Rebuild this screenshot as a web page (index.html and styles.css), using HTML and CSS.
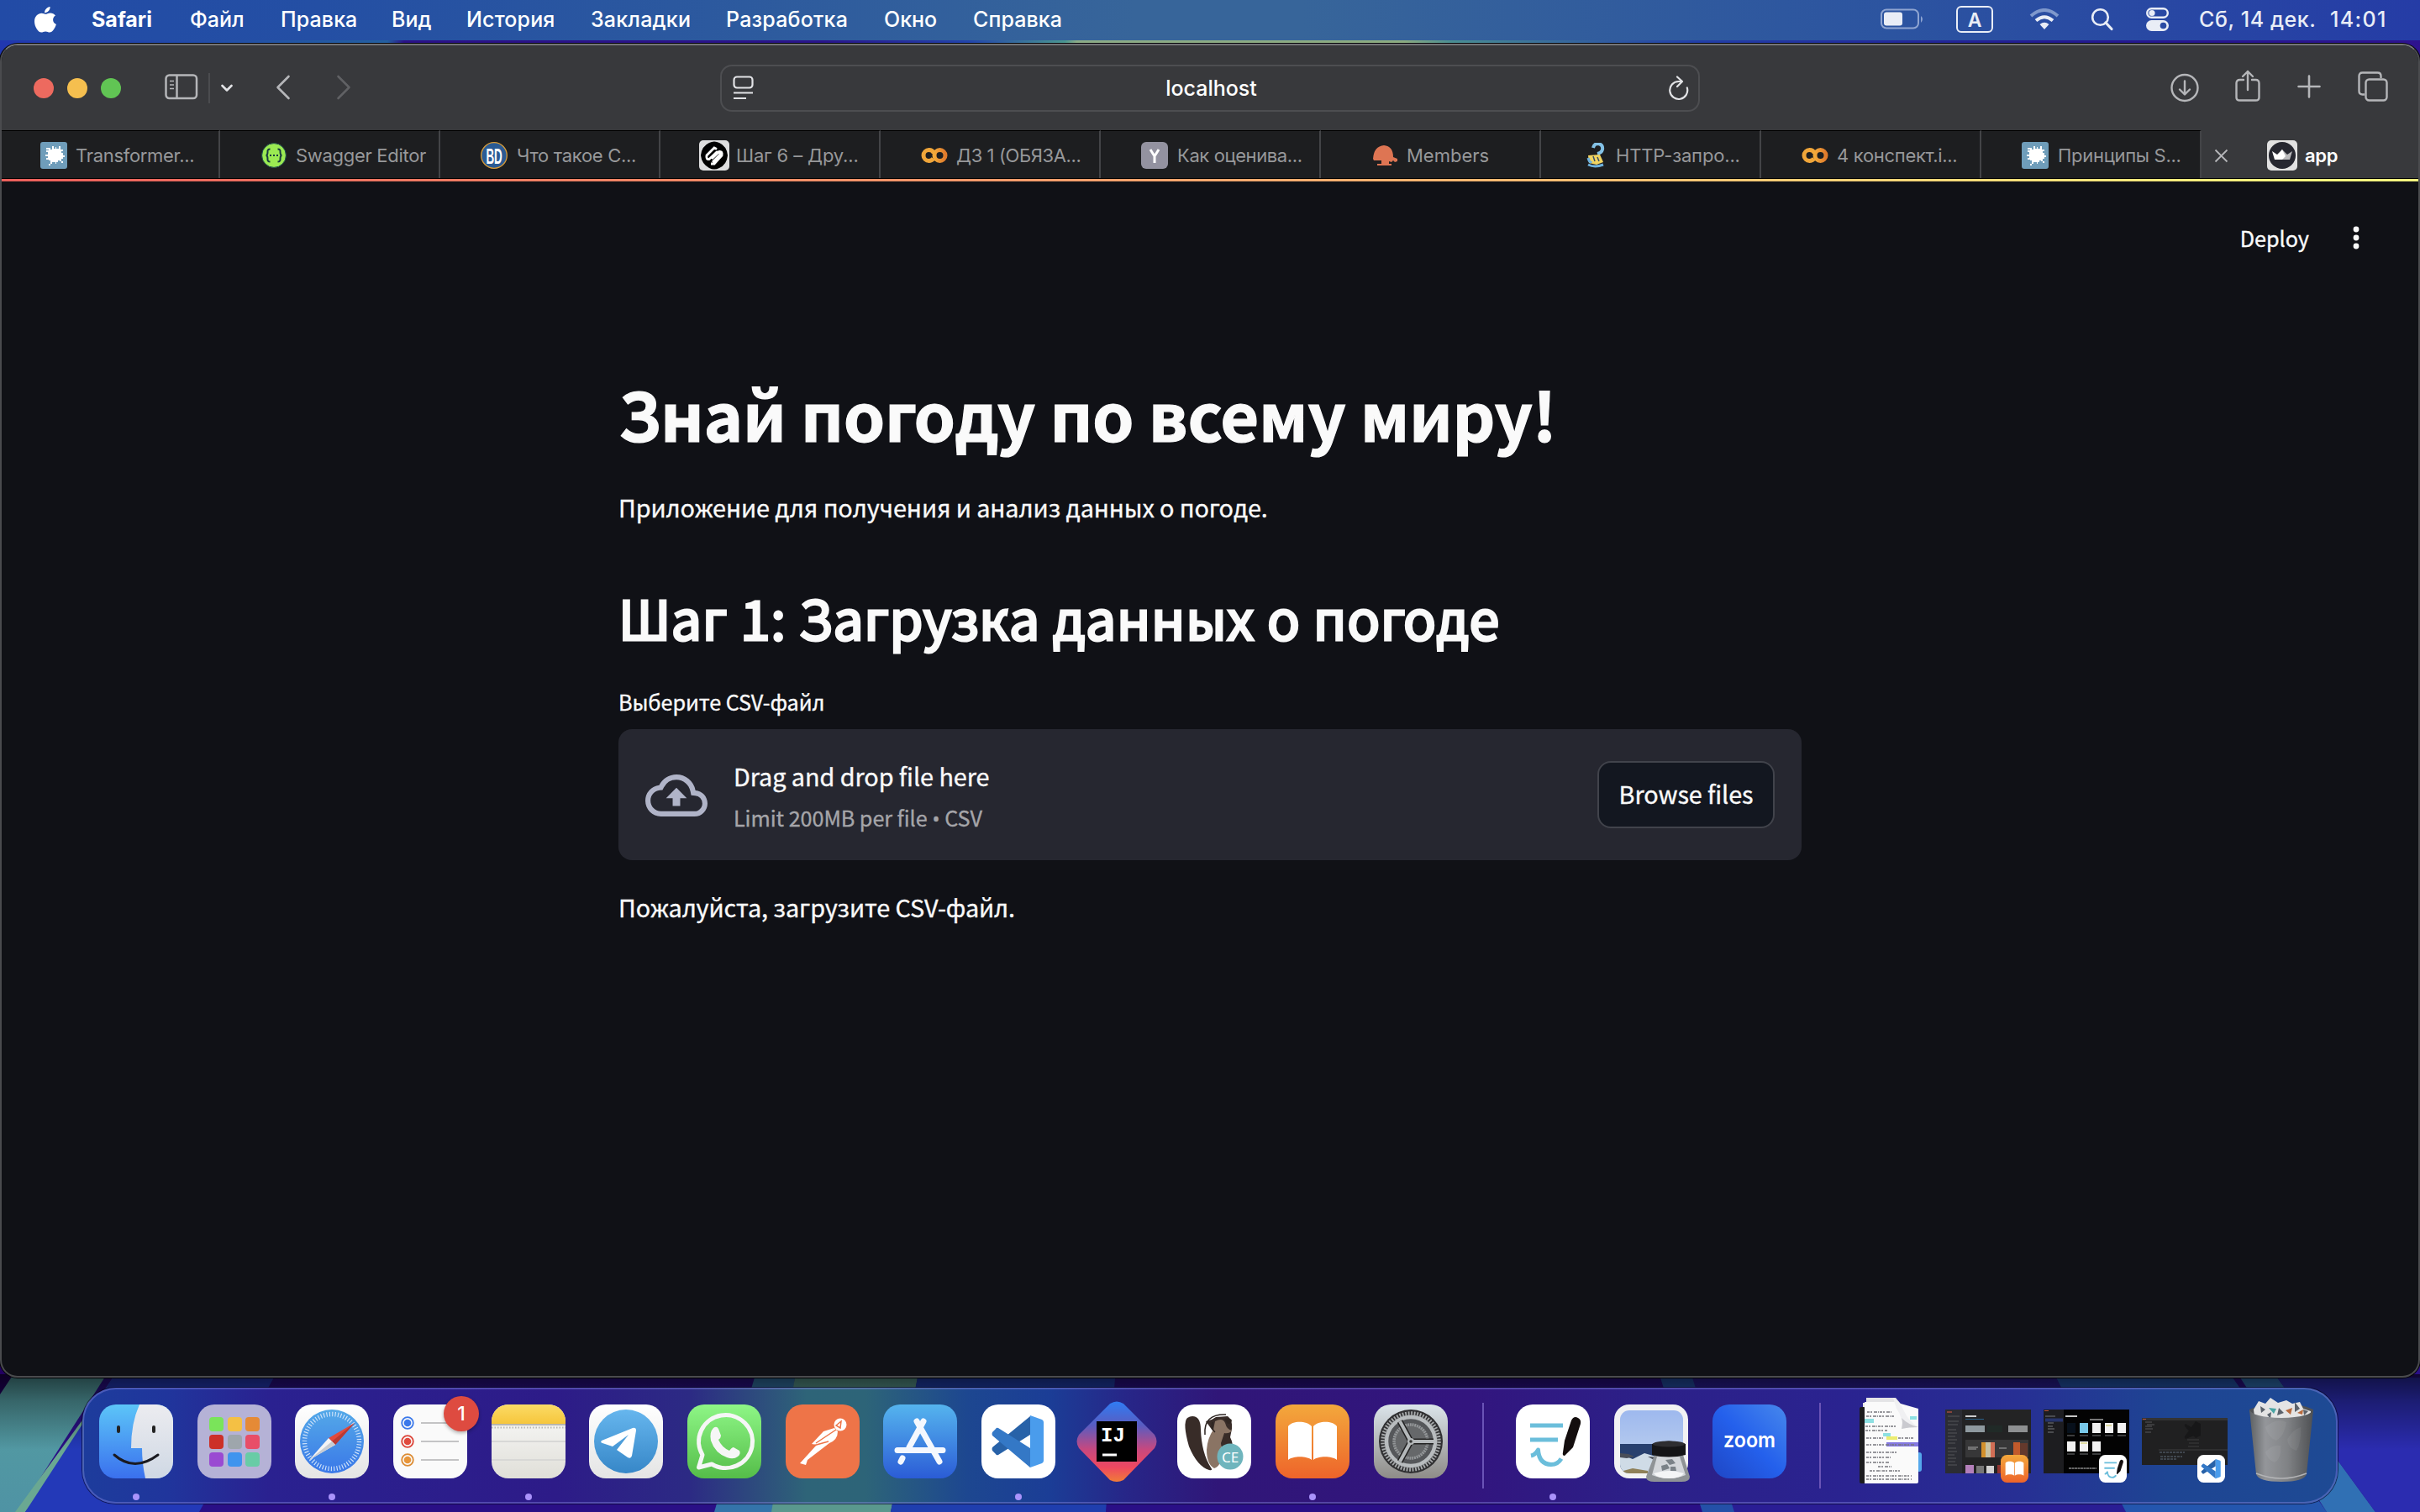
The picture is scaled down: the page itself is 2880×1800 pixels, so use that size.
FILE: index.html
```html
<!DOCTYPE html>
<html lang="ru">
<head>
<meta charset="utf-8">
<title>app</title>
<link rel="stylesheet" href="styles.css">
</head>
<body>
<svg width="0" height="0" class="defs" aria-hidden="true">
  <defs>
    <linearGradient id="gBooks" x2="0" y2="1"><stop offset="0" stop-color="#f3a83c"/><stop offset="1" stop-color="#ee642a"/></linearGradient>
    <linearGradient id="gWhite" x2="0" y2="1"><stop offset="0" stop-color="#fff"/><stop offset="1" stop-color="#e4e4e4"/></linearGradient>
    <linearGradient id="gFinder" x2="0" y2="1"><stop offset="0" stop-color="#5cc5f8"/><stop offset="1" stop-color="#3a70ee"/></linearGradient>
    <linearGradient id="gFace" x2="0" y2="1"><stop offset="0" stop-color="#ececf0"/><stop offset="1" stop-color="#cfd8e4"/></linearGradient>
    <linearGradient id="gDial" x2="0" y2="1"><stop offset="0" stop-color="#54a9e8"/><stop offset="1" stop-color="#3a78e8"/></linearGradient>
    <linearGradient id="gWa" x2="0" y2="1"><stop offset="0" stop-color="#8ef686"/><stop offset="1" stop-color="#55bd49"/></linearGradient>
    <linearGradient id="gStore" x2="0" y2="1"><stop offset="0" stop-color="#55b4ee"/><stop offset="1" stop-color="#2b5cd6"/></linearGradient>
    <linearGradient id="gTg" x2="0" y2="1"><stop offset="0" stop-color="#66b6ee"/><stop offset="1" stop-color="#3787c8"/></linearGradient>
    <linearGradient id="gGear" x2="0" y2="1"><stop offset="0" stop-color="#dbe4ea"/><stop offset="1" stop-color="#8e8c88"/></linearGradient>
    <linearGradient id="gZoom" x1="0" y1="1" x2="1" y2="0"><stop offset="0" stop-color="#1f46c4"/><stop offset=".5" stop-color="#2460ec"/><stop offset="1" stop-color="#4788ec"/></linearGradient>
    <linearGradient id="gIj" x2="0" y2="1"><stop offset="0" stop-color="#2f7cf4"/><stop offset=".3" stop-color="#5a5cc0"/><stop offset=".6" stop-color="#c8487e"/><stop offset=".82" stop-color="#ef4860"/><stop offset="1" stop-color="#f07c38"/></linearGradient>
    <linearGradient id="gNote" x2="0" y2="1"><stop offset="0" stop-color="#fbdb66"/><stop offset="1" stop-color="#f6c63c"/></linearGradient>
    <linearGradient id="gPaper" x2="0" y2="1"><stop offset="0" stop-color="#fafafa"/><stop offset="1" stop-color="#e0dfd8"/></linearGradient>
    <linearGradient id="gSky" x2="0" y2="1"><stop offset="0" stop-color="#9ab6ee"/><stop offset="1" stop-color="#b2c8ee"/></linearGradient>
    <linearGradient id="gCan"><stop offset="0" stop-color="#5d6062"/><stop offset=".25" stop-color="#94969a"/><stop offset=".6" stop-color="#808285"/><stop offset="1" stop-color="#4e5053"/></linearGradient>
    <linearGradient id="gCo"><stop offset="0" stop-color="#f2a93a"/><stop offset="1" stop-color="#e07a2c"/></linearGradient>
    <symbol id="burst" viewBox="0 0 32 32">
      <rect width="32" height="32" rx="3" fill="#6f9dba"/>
      <path fill="#fff" d="M10 10V7h2v2h2V5h2v3h2V6h1v2h3V5h2v4h3v2h-2v2h2v3h2v2h-2v2h-2v3h2v2h-2v-2h-2v-1h-2v2h-2v2h-1v-2h-4v2h-2v2h-2v-2h2v-4h-2v-1H7v-2h2v-2H6v-2h3v-3H7v-2h3v-1H7v-2h3z"/>
    </symbol>
    <symbol id="colab" viewBox="0 0 32 20">
      <circle cx="9.500" cy="10" r="6.500" fill="none" stroke="#f0a63a" stroke-width="5" stroke-dasharray="33 8" stroke-dashoffset="-4"/>
      <circle cx="22.500" cy="10" r="6.500" fill="none" stroke="url(#gCo)" stroke-width="5"/>
    </symbol>
    <symbol id="books" viewBox="0 0 88 88">
      <rect width="88" height="88" rx="20" fill="url(#gBooks)"/>
      <path fill="#fff" d="M15 26c5-7 22-7 28 0v40c-6-5-22-5-28 0zM45 26c6-7 23-7 28 0v40c-6-5-22-5-28 0z"/>
    </symbol>
    <symbol id="vscode" viewBox="0 0 88 88">
      <rect width="88" height="88" rx="20" fill="#fff"/>
      <path fill="#2862a8" d="M58 14v22L20 60q-2 1-3-1l-4-4q-1-2 0-4z"/>
      <path fill="#3478c6" d="M58 75V52L20 28q-2-1-3 1l-4 4q-1 2 0 4z"/>
      <path fill="#4a9cec" d="M58 13l14 5q2 1 2 3v46q0 2-2 3l-14 5z"/>
    </symbol>
    <symbol id="notesapp" viewBox="0 0 88 88">
      <rect width="88" height="88" rx="20" fill="#fff"/>
      <path fill="none" stroke="#6bbedb" stroke-width="5" stroke-linejoin="round" d="M17 25h39M17 42h33M18 61q5-1 8.500-7 1 17 15.500 17.500 8 0 12-7"/>
      <path fill="#140e0e" d="M66 19q3-6 8-3 4 2 3 7l-9 28-10 10q-3 0-2-4l2-14z"/>
    </symbol>
  </defs>
</svg>

<svg class="wallpaper" viewBox="0 0 2880 1800" aria-hidden="true">
  <defs>
    <linearGradient id="strip"><stop offset="0" stop-color="#2137b0"/><stop offset=".16" stop-color="#2460a0"/><stop offset=".167" stop-color="#2b1186"/><stop offset=".34" stop-color="#2a148a"/><stop offset=".4" stop-color="#2244ac"/><stop offset=".44" stop-color="#4a9690"/><stop offset=".445" stop-color="#8cab86"/><stop offset=".58" stop-color="#8cab80"/><stop offset=".6" stop-color="#4a8e92"/><stop offset=".7" stop-color="#223fa8"/><stop offset=".85" stop-color="#231a90"/><stop offset="1" stop-color="#2e128e"/></linearGradient>
    <linearGradient id="shade" x2="0" y2="1"><stop offset="0" stop-opacity=".62"/><stop offset=".35" stop-opacity=".35"/><stop offset="1" stop-opacity="0"/></linearGradient>
    <linearGradient id="left" x2="0" y2="1"><stop offset="0" stop-color="#56a0a0"/><stop offset="1" stop-color="#4f93a4"/></linearGradient>
  </defs>
  <rect width="2880" height="100" fill="url(#strip)"/>
  <rect y="1600" width="2880" height="200" fill="#2a0f86"/>
  <path fill="#220060" d="M0 1600h40L0 1662z"/>
  <path fill="url(#left)" d="M40 1600h110L22 1800H0v-140z"/>
  <path fill="#6aa892" d="M135 1640h12L30 1800H18z"/>
  <path fill="#2339b8" d="M147 1620h190L237 1800H30z"/>
  <path fill="#3474aa" d="M898 1640h48l-22 160h-74z"/>
  <path fill="#5a988e" d="M946 1640h146l-32 160H918z"/>
  <path fill="#1f3eae" d="M1092 1640h235l-11 160h-256z"/>
  <path fill="#2a1d94" d="M1976 1640h471l83 160h-504z"/>
  <path fill="#2450a8" d="M1976 1640h38l50 160h-38z"/>
  <path fill="#2456ae" d="M2447 1640h210l112 160h-239z"/>
  <path fill="#3070b4" d="M2666 1640h44l117 160h-58z"/>
  <path fill="#2b2cb0" d="M2710 1640h170v160h-53z"/>
  <rect y="1636" width="2880" height="90" fill="url(#shade)"/>
</svg>

<div class="screen">
  <nav class="menubar">
    <svg class="apple" viewBox="0 0 26 31"><path fill="#fff" d="M18.600 0c.3 3.800-3 7.300-6.500 7.200C11.800 3.800 15.200.3 18.600 0zM25 10.600c-4.300 2.600-3.700 8.600.9 10.400C24.400 25.500 21.400 30.500 18.200 30.600c-2 0-2.700-1.200-5-1.200s-3.200 1.200-5 1.200C4.300 30.500 0 23.700 0 17.500 0 9.700 6.800 6.300 11.200 8.300c1.700.7 2.600.7 4.300 0 3.300-1.400 7.300-.7 9.500 2.300z"/></svg>
    <span class="m m-app">Safari</span><span class="m m-file">Файл</span><span class="m m-edit">Правка</span><span class="m m-view">Вид</span><span class="m m-hist">История</span><span class="m m-book">Закладки</span><span class="m m-dev">Разработка</span><span class="m m-win">Окно</span><span class="m m-help">Справка</span>
    <div class="status">
      <svg width="52" height="26" viewBox="0 0 52 26"><rect x="1" y="1.500" width="44" height="22" rx="6" fill="none" stroke="#8fa5d2" stroke-width="2"/><rect x="4" y="4.500" width="22" height="16" rx="3" fill="#e9edf6"/><path d="M48 9q4 3.500 0 8z" fill="#8fa5d2"/></svg>
      <svg class="s-a" width="44" height="32" viewBox="0 0 44 32"><rect x="1" y="1" width="42" height="30" rx="5" fill="none" stroke="#e9edf6" stroke-width="2"/><text x="22" y="24.500" text-anchor="middle" class="kbd">A</text></svg>
      <svg class="s-w" width="36" height="26" viewBox="0 0 36 26"><path d="M2 9Q18-5 34 9" fill="none" stroke="#7f98cc" stroke-width="4"/><path d="M8 14.500Q18 6 28 14.500" fill="none" stroke="#e9edf6" stroke-width="4"/><path d="M12.500 19q5.500-4.500 11 0L18 25z" fill="#e9edf6"/></svg>
      <svg class="s-s" width="28" height="28" viewBox="0 0 28 28"><circle cx="11.500" cy="11.500" r="9.300" fill="none" stroke="#e9edf6" stroke-width="2.600"/><path d="M18 18l7 7.500" stroke="#e9edf6" stroke-width="3.200" stroke-linecap="round"/></svg>
      <svg class="s-c" width="27" height="28" viewBox="0 0 27 28"><rect x="1.200" y="1.200" width="24.600" height="10.600" rx="5.300" fill="none" stroke="#e9edf6" stroke-width="2.400"/><circle cx="7" cy="6.500" r="3.600" fill="#e9edf6"/><rect y="15" width="27" height="13" rx="6.500" fill="#e9edf6"/><circle cx="20.500" cy="21.500" r="3.800" fill="#2a4ba4"/></svg>
      <span class="date">Сб, 14 дек.</span><span class="clock">14:01</span>
    </div>
  </nav>

  <main class="window">
    <header class="toolbar">
      <i class="light red"></i><i class="light amber"></i><i class="light green"></i>
      <svg class="t-side" width="40" height="31" viewBox="0 0 40 31" fill="none" stroke="#b5b6b9" stroke-width="2.500"><rect x="1.500" y="1.500" width="36.500" height="27.500" rx="4"/><path d="M14.500 2v27"/><path d="M6 8.500h5M6 13h5M6 17.500h5" stroke-width="1.600"/></svg>
      <i class="t-rule"></i>
      <svg class="t-down" width="14" height="10" viewBox="0 0 14 10"><path d="M1.500 2L7 7.500 12.500 2" fill="none" stroke="#e2e3e6" stroke-width="2.600" stroke-linecap="round" stroke-linejoin="round"/></svg>
      <svg class="t-back" width="18" height="30" viewBox="0 0 18 30"><path d="M15.500 2L2.500 15l13 13" fill="none" stroke="#b5b6b9" stroke-width="2.600" stroke-linecap="round" stroke-linejoin="round"/></svg>
      <svg class="t-fwd" width="18" height="30" viewBox="0 0 18 30"><path d="M2.500 2l13 13-13 13" fill="none" stroke="#606164" stroke-width="2.600" stroke-linecap="round" stroke-linejoin="round"/></svg>
      <div class="address">
        <svg width="26" height="30" viewBox="0 0 26 30" fill="none" stroke="#e2e3e6" stroke-width="2.200"><rect x="1.500" y="1.500" width="22" height="13" rx="3.500"/><path d="M1 20.500h23M1 27h15"/></svg>
        <span>localhost</span>
        <svg width="26" height="30" viewBox="0 0 26 30" fill="none" stroke="#e2e3e6" stroke-width="2.200" stroke-linecap="round" stroke-linejoin="round"><path d="M22.800 14.500A10.500 10.500 0 1 1 12.500 7h3.500M11 1.500L17 7l-6 6"/></svg>
      </div>
      <div class="actions">
        <svg width="34" height="36" viewBox="0 0 34 36" fill="none" stroke="#b5b6b9" stroke-width="2.400" stroke-linecap="round" stroke-linejoin="round"><circle cx="17" cy="18.500" r="15.500"/><path d="M17 10.500v15.500M11 20.500l6 6 6-6"/></svg>
        <svg class="a-share" width="30" height="38" viewBox="0 0 30 38" fill="none" stroke="#b5b6b9" stroke-width="2.400" stroke-linecap="round" stroke-linejoin="round"><path d="M10 12H5.500Q1.500 12 1.500 16v17q0 3.500 4 3.500h19q4 0 4-3.500V16q0-4-4-4H20M15 24V2M9 8l6-6 6 6"/></svg>
        <svg class="a-plus" width="28" height="28" viewBox="0 0 28 28" stroke="#b5b6b9" stroke-width="2.600" stroke-linecap="round"><path d="M14 1.500v25M1.500 14h25"/></svg>
        <svg class="a-tabs" width="36" height="36" viewBox="0 0 36 36" fill="none" stroke="#b5b6b9" stroke-width="2.400"><path d="M8 27.500H5.500q-4 0-4-4V5.500q0-4 4-4h18q4 0 4 4V8"/><rect x="9.500" y="9.500" width="25" height="25" rx="4"/></svg>
      </div>
    </header>
    <div class="tabs">
      <div class="tab t1"><svg width="32" height="32"><use href="#burst"/></svg><span>Transformer...</span></div>
      <div class="tab t2"><svg width="30" height="30" viewBox="0 0 30 30"><circle cx="15" cy="15" r="14.400" fill="#9bea52" stroke="#1d4a50"/><path d="M10.500 7.500q-3.500 0-3 3.500 0 4-2 4 2 0 2 4-.5 3.500 3 3.500M19.500 7.500q3.500 0 3 3.500 0 4 2 4-2 0-2 4 .5 3.500-3 3.500" fill="none" stroke="#173b3e" stroke-width="2"/><path d="M10 15h10" stroke="#173b3e" stroke-width="2" stroke-dasharray="2 2"/></svg><span>Swagger Editor</span></div>
      <div class="tab t3"><svg width="32" height="32" viewBox="0 0 32 32" overflow="visible"><circle cx="16" cy="16" r="15.300" fill="#2b5b94" stroke="#d99c38" stroke-width="1.300"/><text transform="translate(16 25.500) scale(.56 1.050)" text-anchor="middle" class="bd">BD</text></svg><span>Что такое С...</span></div>
      <div class="tab t4"><svg width="36" height="36" viewBox="0 0 36 36"><rect width="36" height="36" rx="5" fill="#dededf"/><path fill="#000" d="M12 3q6-3 12 0 9 4 10 15-1 11-10 15-6 3-12 0Q3 28 2 18 3 7 12 3z"/><path d="M21 10.500l-3-1.500-9 9q-1 5 3 4.500l9-8.500q4-1 4 3l-9 9M14 28l4 0 9-10q1-5-3-4.500l-9 8.500" fill="none" stroke="#fff" stroke-width="2.800"/></svg><span>Шаг 6 – Дру...</span></div>
      <div class="tab t5"><svg width="32" height="20"><use href="#colab"/></svg><span>ДЗ 1 (ОБЯЗА...</span></div>
      <div class="tab t6"><svg width="32" height="32" viewBox="0 0 32 32"><rect width="32" height="32" rx="6" fill="#9392a0"/><path d="M11 9l5 8 5-8M16 17v8" fill="none" stroke="#fff" stroke-width="3"/></svg><span>Как оценива...</span></div>
      <div class="tab t7"><svg width="30" height="25" viewBox="0 0 30 25"><path fill="#de7553" d="M1 16Q2 1 14 0q11 1 11 14l5 2v3l-3 1-2-2-2 2-3-1v3h3v2H6v-2h5v-4H2z"/></svg><span>Members</span></div>
      <div class="tab t8"><svg width="26" height="30" viewBox="0 0 26 30"><path d="M10 6q1-5 6-5 6 1 5 7-1 4-6 5" fill="none" stroke="#83c1e6" stroke-width="4"/><path d="M4 15l14-1 4 9-8 3-9-2z" fill="#f2d461"/><path d="M4 26q8 4 18 0M4 18q2 7 4 4" fill="none" stroke="#6fb2de" stroke-width="3"/><path d="M10 16l2 6m3-5l2 5" stroke="#38506a" stroke-width="1.500"/></svg><span>HTTP-запро...</span></div>
      <div class="tab t9"><svg width="32" height="20"><use href="#colab"/></svg><span>4 конспект.i...</span></div>
      <div class="tab t10"><svg width="32" height="32"><use href="#burst"/></svg><span>Принципы S...</span></div>
      <div class="tab active"><svg class="close" width="17" height="17" viewBox="0 0 17 17"><path d="M1.500 1.500l14 14m0-14l-14 14" stroke="#b5b6b9" stroke-width="1.800"/></svg><svg width="36" height="36" viewBox="0 0 36 36"><rect width="36" height="36" rx="5" fill="#e2e2e2"/><circle cx="18" cy="18" r="16" fill="#262730"/><path fill="#fff" d="M6 13l6 4 6-6 1 12H9z"/><path fill="#b9b9bb" d="M30 13l-6 4-6-6-6 12h15z"/><path fill="#fff" d="M18 11l-9 12h9l4-4z"/></svg><span>app</span></div>
    </div>
    <div class="rainbow"></div>
    <section class="page">
      <div class="apphead"><span>Deploy</span><svg width="8" height="28" viewBox="0 0 8 28" fill="#fafafa"><circle cx="4" cy="4" r="3.400"/><circle cx="4" cy="14" r="3.400"/><circle cx="4" cy="24" r="3.400"/></svg></div>
      <div class="block">
        <h1>Знай погоду по всему миру!</h1>
        <p class="intro">Приложение для получения и анализ данных о погоде.</p>
        <h2>Шаг 1: Загрузка данных о погоде</h2>
        <label>Выберите CSV-файл</label>
        <div class="drop">
          <svg width="74" height="50" viewBox="0 4 24 16" preserveAspectRatio="none" fill="#b0b4c8"><path d="M19.350 10.040A7.490 7.490 0 0 0 12 4C9.110 4 6.600 5.640 5.350 8.040A5.994 5.994 0 0 0 0 14c0 3.310 2.690 6 6 6h13c2.760 0 5-2.240 5-5 0-2.640-2.050-4.780-4.650-4.960zM19 18H6c-2.210 0-4-1.790-4-4 0-2.050 1.530-3.760 3.560-3.970l1.070-.11.5-.95A5.469 5.469 0 0 1 12 6c2.620 0 4.880 1.860 5.390 4.430l.3 1.500 1.530.11A2.980 2.980 0 0 1 22 15c0 1.650-1.350 3-3 3zM8 13h2.550v3h2.900v-3H16l-4-4z"/></svg>
          <div class="hint"><span class="hint-main">Drag and drop file here</span><span class="hint-sub">Limit 200MB per file <span class="bullet">•</span> CSV</span></div>
          <button type="button">Browse files</button>
        </div>
        <p class="please">Пожалуйста, загрузите CSV-файл.</p>
      </div>
    </section>
  </main>

  <footer class="dock">
    <div class="item run"><svg viewBox="0 0 88 88"><clipPath id="cf"><rect width="88" height="88" rx="20"/></clipPath><g clip-path="url(#cf)"><rect width="88" height="88" fill="url(#gFinder)"/><path fill="url(#gFace)" d="M48 0h40v88H55q-4-18-4-36H38Q38 22 48 0z"/><path d="M23 27v5M65 27v5" stroke="#222" stroke-width="4" stroke-linecap="round"/><path d="M18 60q24 21 52 0" fill="none" stroke="#1a1a20" stroke-width="3" stroke-linecap="round"/></g></svg></div>
    <div class="item"><svg viewBox="0 0 88 88"><rect width="88" height="88" rx="20" fill="#b5b2d6"/><g><rect x="14" y="15" width="17" height="17" rx="4" fill="#7ae45a"/><rect x="36" y="15" width="17" height="17" rx="4" fill="#f4c044"/><rect x="57" y="15" width="17" height="17" rx="4" fill="#e58a36"/><rect x="14" y="36" width="17" height="17" rx="4" fill="#cc3028"/><rect x="36" y="36" width="17" height="17" rx="4" fill="#9ea6ac"/><rect x="57" y="36" width="17" height="17" rx="4" fill="#e84e68"/><rect x="14" y="57" width="17" height="17" rx="4" fill="#9a4ad2"/><rect x="36" y="57" width="17" height="17" rx="4" fill="#3f94ee"/><rect x="57" y="57" width="17" height="17" rx="4" fill="#68cca6"/></g></svg></div>
    <div class="item run"><svg viewBox="0 0 88 88"><rect width="88" height="88" rx="20" fill="url(#gWhite)"/><circle cx="44" cy="44" r="38" fill="url(#gDial)"/><circle cx="44" cy="44" r="32.500" fill="none" stroke="#d4e6fa" stroke-width="5.500" stroke-dasharray="1.100 2.303"/><path d="M71 22L40 40l8 8z" fill="#e2493c"/><path d="M71 22L44 44l4 4z" fill="#b83a34"/><path d="M17 66l23-26 8 8z" fill="#f4f4f4"/><path d="M17 66l27-22 4 4z" fill="#c8ccd2"/></svg></div>
    <div class="item"><svg viewBox="0 0 88 88"><rect width="88" height="88" rx="20" fill="#fafafa"/><g fill="none" stroke-width="1.800"><circle cx="17" cy="22" r="6.800" stroke="#3a78ea"/><circle cx="17" cy="44" r="6.800" stroke="#dc4438"/><circle cx="17" cy="66" r="6.800" stroke="#dc8c34"/></g><circle cx="17" cy="22" r="4.300" fill="#3a78ea"/><circle cx="17" cy="44" r="4.300" fill="#e04a3e"/><circle cx="17" cy="66" r="4.300" fill="#e8963a"/><path d="M33 22h45M33 44h45M33 66h45" stroke="#b2b2b4" stroke-width="1.600"/></svg><b class="badge">1</b></div>
    <div class="item run"><svg viewBox="0 0 88 88"><clipPath id="cn"><rect width="88" height="88" rx="20"/></clipPath><g clip-path="url(#cn)"><rect width="88" height="88" fill="url(#gPaper)"/><rect width="88" height="23" fill="url(#gNote)"/><path d="M0 24h88" stroke="#a5a298" stroke-width="1.500"/><path d="M0 27.500h88" stroke="#b9b8b4" stroke-width="2" stroke-dasharray="1.500 2"/><path d="M0 44h88M0 66h88" stroke="#d8d8d6" stroke-width="2"/></g></svg></div>
    <div class="item"><svg viewBox="0 0 88 88"><rect width="88" height="88" rx="20" fill="url(#gWhite)"/><circle cx="44" cy="44" r="38" fill="url(#gTg)"/><path fill="#fff" d="M15 43q-2 2 1 3l12 4 19-14-14 18 13 9q4 2 5-2l5-30q0-4-4-3z"/></svg></div>
    <div class="item"><svg viewBox="0 0 88 88"><rect width="88" height="88" rx="20" fill="url(#gWa)"/><path d="M13.500 75l4.500-15A32 31.500 0 1 1 29 71z" fill="none" stroke="#f6f6f6" stroke-width="5" stroke-linejoin="round"/><path fill="#f6f6f6" d="M31 28q4-3 6 1l3 8q0 3-3 5 4 9 13 13 3-4 5-4l7 4q2 4-2 7-5 4-13 1-14-5-19-20-2-10 3-15z"/></svg></div>
    <div class="item"><svg viewBox="0 0 88 88"><rect width="88" height="88" rx="20" fill="#ee7448"/><circle cx="65" cy="24" r="7.500" fill="#fff"/><path fill="#fff" d="M58 28l4 4q0 10-10 14L26 66l-2 6-7-2 20-22-6-1 14-15z"/><path d="M60 25l6-5-1 8zM36 46l24-16M33 49l18-5" stroke="#ee7448" stroke-width="1.500" fill="none"/></svg></div>
    <div class="item"><svg viewBox="0 0 88 88"><rect width="88" height="88" rx="20" fill="url(#gStore)"/><g stroke="#f4f8fe" stroke-width="7" stroke-linecap="round"><path d="M17 54.500h54M48 20L31 51M40 20l27 48M23 64l-2 4"/></g></svg></div>
    <div class="item run"><svg viewBox="0 0 88 88"><use href="#vscode"/></svg></div>
    <div class="item"><svg viewBox="0 0 88 88" overflow="visible"><path d="M36-1q8-5 16 0l37 37q5 8 0 16L52 90q-8 4-16 0L-1 52q-5-8 0-16z" fill="url(#gIj)"/><rect x="20" y="20" width="48" height="48" fill="#000"/><text x="25" y="44" class="ij">IJ</text><path d="M27 60h17" stroke="#fff" stroke-width="3"/></svg></div>
    <div class="item"><svg viewBox="0 0 88 88"><rect width="88" height="88" rx="20" fill="#fff"/><path fill="#382c28" d="M18 14q10 0 10 16 1 28 12 45 3 4-2 3Q24 74 14 50 6 22 12 16q3-2 6-2zM34 20l7-2 5-3 14-1q6 4 5 15l-2 10q4 8 2 12l-10 5-8-18z"/><path fill="#8a7464" d="M45 20q9-5 12 2 2 8 8 9-3 4-9 3l-4 12q4 26-8 30-9-5-9-22 1-14 8-24z"/><path d="M33 36q-2-25 25-24M45 33q-5-4-3-12" fill="none" stroke="#2d2522" stroke-width="1.500"/><path fill="#302622" d="M56 17q7-2 9 2-2 6-6 3z"/><circle cx="63" cy="62" r="15.500" fill="#6fb5bd"/><text x="63" y="68.500" text-anchor="middle" class="ce">CE</text></svg></div>
    <div class="item run"><svg viewBox="0 0 88 88"><use href="#books"/></svg></div>
    <div class="item"><svg viewBox="0 0 88 88"><rect width="88" height="88" rx="20" fill="url(#gGear)"/><circle cx="44" cy="44" r="38" fill="#303032"/><circle cx="44" cy="44" r="32" fill="#55575a"/><circle cx="44" cy="44" r="33.500" fill="none" stroke="#a8abac" stroke-width="4.500" stroke-dasharray="1.800 1.707"/><circle cx="44" cy="44" r="29" fill="none" stroke="#b8bcbe" stroke-width="4.500"/><circle cx="44" cy="44" r="20" fill="#66686a" stroke="#939698" stroke-width="3.500" stroke-dasharray="2 .8"/><path d="M44 44h27M44 44L31 20M44 44L31 68" stroke="#222" stroke-width="7"/><path d="M44 44h27M44 44L31 20M44 44L31 68" stroke="#b4b8ba" stroke-width="4"/><circle cx="44" cy="44" r="4" fill="#b4b8ba"/><circle cx="44" cy="44" r="1.800" fill="#333"/></svg></div>
    <i class="sep s1"></i>
    <div class="item run"><svg viewBox="0 0 88 88"><use href="#notesapp"/></svg></div>
    <div class="item"><svg viewBox="0 0 88 88" overflow="visible"><rect width="88" height="88" rx="18" fill="#f2f2f3"/><clipPath id="cp"><rect x="7" y="7" width="75" height="75" rx="11"/></clipPath><g clip-path="url(#cp)"><rect width="88" height="48" fill="url(#gSky)"/><rect y="47" width="88" height="41" fill="#28406e"/><path fill="#cfdbe6" d="M0 65l12-4 10 4 14-7 14 4 30-3v29H0z"/><path fill="#4a4e58" d="M7 58l10 1 7 3-9 2-8-1zM40 62l16 1-7 4z"/><path fill="#8f8058" d="M7 80l15-4 18 3v9H7z"/></g><path fill="#8f9396" d="M48 60h34l8 26q0 6-10 6H48q-10 0-10-6z"/><path fill="#d3d6da" d="M51 62h27l7 22q-20 8-40 0z"/><path fill="#f4f5f6" d="M47 82q18-6 36 0-4 6-18 6t-18-6z"/><path fill="#7b8288" d="M61 66l8-1 4 5-7 2zM56 73l7-2 3 5-9 3zM67 74l6 0 1 5-7 0z"/><path fill="#151517" d="M45 47q20-7 40 0v13q-20 5-40 0z"/><ellipse cx="65" cy="47" rx="19" ry="3.600" fill="#2e2e31"/></svg></div>
    <div class="item"><svg viewBox="0 0 88 88"><rect width="88" height="88" rx="20" fill="url(#gZoom)"/><text x="44" y="51" text-anchor="middle" class="zm" textLength="62" lengthAdjust="spacingAndGlyphs">zoom</text></svg></div>
    <i class="sep s2"></i>
    <svg class="paper" width="76" height="104" viewBox="0 0 76 104"><rect x="68" y="66" width="6" height="23" rx="3" fill="#55a8ec"/><path fill="#e4e4e6" d="M8 1h35l20 24v20H4V7h4z"/><rect y="12" width="7" height="91" rx="2" fill="#1c1c1e"/><path fill="#fafafa" d="M6 6h36l28 8v87q0 2-2 2H6z"/><path fill="#8de0e2" d="M6 26h11v5H6zM28 43h9v4h-9zM60 23h8v4h-8z"/><path fill="#ecec70" d="M32 47h13v4H32z"/><path fill="#8478e0" d="M32 54h38v5H32z"/><g stroke="#77777d" stroke-width="1.600" stroke-dasharray="3 1 2 2 4 1 1 1"><path d="M9 18h30M8 23h33M7 35h38M7 40h26M8 49h20M46 49h18M8 57h58M8 66h36M8 72h30M8 78h28M22 83h16M12 88h36M8 94h54M8 98h54"/></g><path fill="#f0f0f2" d="M40 1q8 4 12 14 6 14 18 21-12 0-20 2 2-14-6-24z"/><path fill="#cacacf" d="M50 38q2-8 0-13 8 8 20 11-12 0-20 2z"/></svg>
    <div class="thumb th1"><svg class="shot" width="102" height="76" viewBox="0 0 102 76"><rect width="102" height="76" fill="#232324"/><rect width="20" height="76" fill="#2c2d33"/><path d="M3 8h14M3 14h13M3 18h12M3 24h10M3 28h11M3 32h9M3 36h11M3 40h9M3 46h10M3 50h11M3 54h8M3 58h10M3 62h9M3 66h11" stroke="#55565b" stroke-width="1.200"/><path d="M2 3h6" stroke="#b3513f" stroke-width="1.300"/><path d="M24 8h13" stroke="#ccc" stroke-width="2"/><path d="M24 11.500h22" stroke="#29608a"/><rect x="24" y="19" width="23" height="8" fill="#8e999f"/><rect x="50" y="19" width="18" height="8" fill="#202a27"/><rect x="75" y="19" width="23" height="8" fill="#8e9092"/><rect x="24" y="36" width="75" height="21" fill="#373738"/><rect x="43" y="39" width="5" height="18" fill="#d4912c"/><rect x="48" y="39" width="6" height="18" fill="#c7c2a4"/><rect x="54" y="39" width="5" height="18" fill="#d16e55"/><rect x="81" y="39" width="8" height="18" fill="#c25a2b"/><rect x="89" y="40" width="9" height="17" fill="#64392c"/><path d="M27 45h12M27 47h10M64 46h9" stroke="#aaa"/><rect x="24" y="66" width="10" height="10" fill="#b37fba"/><rect x="37" y="67" width="9" height="9" fill="#777"/><rect x="49" y="67" width="9" height="9" fill="#d2d2d2"/><rect x="62" y="66" width="9" height="10" fill="#8e3330"/></svg><svg class="mini" viewBox="0 0 88 88"><use href="#books"/></svg></div>
    <div class="thumb th2"><svg class="shot" width="102" height="76" viewBox="0 0 102 76"><rect width="102" height="76" fill="#030303"/><rect width="24" height="76" fill="#1d1d20"/><path d="M1 1.500h5" stroke="#b3513f"/><path d="M2 8h12M5 16h7M5 20h6M5 23h8M5 27h7" stroke="#77787c"/><rect x="2" y="10.500" width="21" height="4" fill="#27346b"/><path d="M26 8h14" stroke="#ddd" stroke-width="1.800"/><path d="M55 12h16" stroke="#777" stroke-width="2"/><rect x="28" y="16" width="10" height="12" fill="#07101b"/><rect x="43" y="16" width="10" height="12" fill="#79c9e9"/><path fill="#f1f1f1" d="M58 16h10v12H58zM73 16h10v12H73zM88 16h10v12H88zM28 38h10v12H28zM43 38h10v12H43zM58 38h10v12H58z"/><path d="M28 31h9M43 31h10M58 31h10M73 31h10M88 31h10M28 53h9M43 53h10M58 53h10" stroke="#77797b"/><path d="M30 70h33" stroke="#ccc" stroke-dasharray="3 .5"/><path d="M74 19h7M44 40h8" stroke="#cfc654"/></svg><svg class="mini" viewBox="0 0 88 88"><use href="#notesapp"/></svg></div>
    <div class="thumb th3"><svg class="shot" width="102" height="56" viewBox="0 0 102 56"><rect width="102" height="56" fill="#202021"/><rect width="102" height="3" fill="#333334"/><path d="M1 1.500h4" stroke="#b3513f"/><path d="M4 5h8M6 8h9M4 10h8M4 13h9M4 17h7" stroke="#56575b"/><path fill="#171718" d="M64 4l6 3v14l-6 3-13-14q-1-2 1-3l18 11-18 7q-2-1-1-3z"/><path d="M20 38h82" stroke="#3c3c3e"/><path d="M21 41h30M22 46h26M22 49h20" stroke="#5e6b7b" stroke-dasharray="3 1"/><path d="M54 26h14M56 30h12M55 34h13" stroke="#3c3c3e"/></svg><svg class="mini" viewBox="0 0 88 88"><use href="#vscode"/></svg></div>
    <svg class="trash" width="78" height="102" viewBox="0 0 78 102"><path fill="#505255" d="M1 14q38-16 76 0l-2 10H3z"/><path fill="#e4e4e4" d="M6 14l6-10 8 3 6-7 9 6 10-3 7 4 9-2 4 8 9 3-1 15q-35 6-65 0z"/><path fill="#5b626b" d="M14 10l6 4-5 4zM36 12l6 6-8 3zM55 5l6 8-6 4zM65 14l6 2-5 5zM22 20l5-3-1 8z"/><path fill="#49a5a4" d="M24 12l9 1-3 6z"/><path fill="#b66a3e" d="M44 15l8-3-2 8zM58 18l7-4-1 6z"/><path fill="url(#gCan)" d="M1 14q3 9 38 10 35-1 38-10l-8 77q-3 9-30 9T9 91z"/><path d="M9 90q30 12 60 0" fill="none" stroke="#b3b4b6" stroke-width="1.500"/><path fill="#fff" opacity=".06" d="M20 35q14-12 25-6-2 16-12 22-10-4-13-16zM46 50q6-12 16-15 1 18-5 28-9-2-11-13zM20 65q8-10 18-8 2 14-7 20-8-3-11-12z"/></svg>
  </footer>
</div>
</body>
</html>
```
FILE: styles.css
```css
* { box-sizing: border-box; }
body { margin: 0; width: 2880px; height: 1800px; overflow: hidden; background: #2a0f86; font-family: Inter, "Liberation Sans", sans-serif; }
svg { display: block; flex: none; }
.defs, .wallpaper { position: absolute; left: 0; top: 0; }
.wallpaper { width: 2880px; height: 1800px; }
.screen { position: relative; height: 1800px; display: flex; flex-direction: column; }

.menubar { height: 48px; flex: none; display: flex; align-items: center; padding: 0 36px 2px 41px; color: #fff; font-size: 25px; font-weight: 480; white-space: nowrap;
  background: linear-gradient(90deg, #224ba6 0, #244fa4 380px, #2b589f 800px, #37659a 1350px, #37659a 1550px, #2c54a0 2250px, #253ca6 2880px); }
.apple { width: 26px; height: 31px; margin-right: 42px; }
.m { flex: none; }
.m-app { width: 117px; font-weight: 700; }
.m-file { width: 108px; }
.m-edit { width: 132px; letter-spacing: .1px; }
.m-view { width: 89px; }
.m-hist { width: 148px; letter-spacing: .15px; }
.m-book { width: 161px; letter-spacing: .2px; }
.m-dev { width: 188px; letter-spacing: .2px; }
.m-win { width: 106px; }
.m-help { letter-spacing: .1px; }
.status { margin-left: auto; display: flex; align-items: center; color: #e9edf6; }
.kbd { font: 600 23px Inter, sans-serif; fill: #e9edf6; }
.s-a { margin-left: 38px; }
.s-w { margin-left: 43px; }
.s-s { margin-left: 37px; }
.s-c { margin-left: 38px; }
.date { margin-left: 36px; width: 156px; letter-spacing: .6px; }
.clock { width: 71px; letter-spacing: 1.4px; }

.window { height: 1588px; margin-top: 4px; flex: none; overflow: hidden; border: 2px solid #4a4b4e; border-top-color: #747578; border-radius: 21px; background: #101116; box-shadow: 0 0 0 1px #050508; display: flex; flex-direction: column; }
.toolbar { height: 101px; flex: none; background: #38393c; display: flex; align-items: center; padding: 0 36px 0 38px; }
.light { width: 24px; height: 24px; border-radius: 50%; margin-right: 16px; flex: none; }
.red { background: #ed6a5f; }
.amber { background: #f5bf4f; }
.green { background: #61c554; }
.t-side { margin-left: 36px; margin-top: -2px; }
.t-rule { width: 2px; height: 36px; background: #4b4c4f; margin-left: 12px; }
.t-down { margin-left: 13px; }
.t-back { margin-left: 51px; margin-top: -2px; }
.t-fwd { margin-left: 54px; margin-top: -2px; }
.address { margin-left: 439px; width: 1166px; height: 56px; border: 2px solid #4d4e51; border-radius: 14px; display: flex; align-items: center; justify-content: space-between; padding: 0 10px 0 13px; color: #fff; font-size: 25px; font-weight: 480; flex: none; }
.actions { margin-left: auto; display: flex; align-items: center; margin-top: -2px; }
.a-share { margin-left: 43px; margin-top: -3px; }
.a-plus { margin-left: 44px; margin-top: -2px; }
.a-tabs { margin-left: 44px; margin-top: -2px; }

.tabs { height: 57px; flex: none; display: flex; }
.tab { width: 262px; height: 57px; flex: none; display: flex; align-items: center; gap: 11px; padding-top: 2px; color: #97989a; font-size: 22px; font-weight: 430; letter-spacing: -.3px; white-space: nowrap; background: #1d1e20; border-top: 1px solid #000; border-right: 2px solid #434447; }
.t1 { width: 260px; padding-left: 46px; gap: 10px; letter-spacing: -.3px; }
.t2 { padding-left: 49px; }
.t3 { padding-left: 48px; }
.t4 { padding-left: 46px; gap: 8px; letter-spacing: -.15px; }
.t5 { padding-left: 48px; gap: 10px; letter-spacing: -.4px; }
.t6 { padding-left: 48px; letter-spacing: -.4px; }
.t7 { padding-left: 61px; letter-spacing: 0; }
.t8 { padding-left: 52px; letter-spacing: -.15px; }
.t9 { padding-left: 48px; gap: 10px; letter-spacing: -.3px; }
.t10 { padding-left: 48px; }
.active { flex: 1; background: #38393c; border-color: #38393c; border-right: 0; color: #fff; font-weight: 600; padding-left: 15px; gap: 9px; }
.close { margin-right: 37px; }
.rainbow { height: 4px; flex: none; border-top: 1px solid #000; background: linear-gradient(90deg, #ea5f5b, #f4a06c 45%, #f8c274 68%, #fbfd80); }

.page { flex: 1; display: flex; flex-direction: column; color: #fafafa; font-family: "Noto Sans CJK SC", "Noto Sans", sans-serif; -webkit-text-stroke: .35px; }
.apphead { height: 120px; padding: 14px 70px 0 0; display: flex; justify-content: flex-end; align-items: center; gap: 52px; font-size: 25.2px; }
.apphead svg { margin-top: 0; }
.block { width: 1408px; margin: 102px 0 0 734px; display: flex; flex-direction: column; align-items: flex-start; white-space: nowrap; }
.block h1, .block h2, .block p { margin: 0; }
.block h1 { font-size: 79.2px; line-height: 106px; font-weight: 700; letter-spacing: -.4px; padding-top: 1px; -webkit-text-stroke: 1.2px; }
.block p { font-size: 28.8px; line-height: 52px; letter-spacing: -.09px; }
.intro { padding-top: 33px; }
.block h2 { padding-top: 61px; font-size: 64.4px; line-height: 86px; font-weight: 400; letter-spacing: .62px; -webkit-text-stroke: 3px; }
label { padding-top: 37px; font-size: 25.2px; line-height: 42px; letter-spacing: -.09px; }
.drop { margin-top: 12px; width: 1408px; height: 156px; border-radius: 16px; background: #262730; display: flex; align-items: center; padding: 0 32px; }
.drop svg { margin-top: 2px; }
.hint { margin-left: 31px; padding-top: 5px; display: flex; flex-direction: column; letter-spacing: -.06px; }
.hint-main { font-size: 28.8px; line-height: 50px; }
.hint-sub { font-size: 25.2px; line-height: 48px; color: #a5a5a9; }
.bullet { font-family: "Open Sans", sans-serif; }
button { margin-left: auto; width: 211px; height: 80px; border: 2px solid #41434b; border-radius: 16px; background: #131720; color: #fafafa; font-family: inherit; font-size: 28.8px; letter-spacing: -.1px; padding: 0 0 3px; white-space: nowrap; -webkit-text-stroke: .35px; }
.please { padding-top: 30px; }

.dock { margin: 12px 0 0 98px; width: 2684px; height: 138px; flex: none; display: flex; align-items: flex-start; padding: 18px 0 0 18px; border: 2px solid rgba(140, 140, 230, .4); border-radius: 40px; box-shadow: 0 0 0 1px rgba(5, 5, 30, .6);
  background: linear-gradient(90deg, #1d3c9c 0, #20359c 100px, #2a2190 220px, #2d1b88 560px, #2c2a84 720px, #2e6478 860px, #2d6478 930px, #1d4790 1050px, #1b3d96 1150px, #272688 1240px, #301678 1350px, #32157e 1650px, #2c2088 1850px, #2a2390 2100px, #272f94 2300px, #1e4593 2480px, #1e4a94 2684px); }
.item { position: relative; width: 88px; height: 88px; margin-right: 28.67px; flex: none; }
.item > svg { width: 88px; height: 88px; }
.run::after { content: ""; position: absolute; left: 40px; top: 106px; width: 8px; height: 8px; border-radius: 50%; background: #aa93fb; }
.badge { position: absolute; left: 60px; top: -10px; width: 42px; height: 42px; border-radius: 50%; background: #de4b40; color: #fff; font-size: 23px; font-weight: 500; line-height: 42px; text-align: center; box-shadow: 0 2px 4px rgba(0, 0, 0, .3); }
.sep { width: 2px; height: 102px; margin-top: -2px; background: #6a54b6; flex: none; }
.s1 { margin-left: 13px; margin-right: 38px; }
.s2 { margin-left: 11px; margin-right: 46px; }
.paper { margin-top: -9px; margin-right: 26px; }
.thumb { position: relative; width: 102px; flex: none; }
.th1, .th2 { margin-top: 6px; margin-right: 15px; }
.th3 { margin-top: 16px; margin-right: 25px; }
.mini { position: absolute; right: 3px; top: 54px; width: 33px; height: 33px; }
.th3 .mini { top: 44px; }
.trash { margin-top: -8px; }
.bd { font: 700 24px "Liberation Sans", sans-serif; fill: #fff; }
.ij { font: 700 24px "Liberation Mono", monospace; fill: #fff; }
.ce { font: 400 17px "Noto Sans", sans-serif; fill: #fff; }
.zm { font: 600 25px Inter, sans-serif; fill: #fff; }
```
